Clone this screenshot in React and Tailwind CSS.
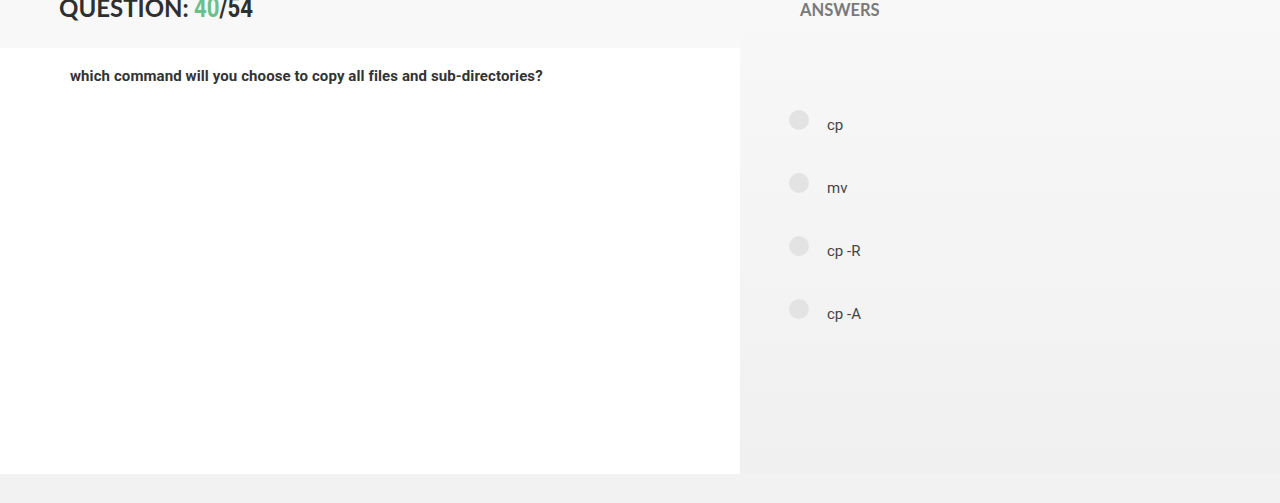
export default function App() {
  const answers = ["cp", "mv", "cp -R", "cp -A"];
  return (
    <div className="h-[503px] w-[1280px] overflow-hidden bg-[#f2f2f2]">
      <div className="flex h-[474px]">
        <div className="flex w-[740px] flex-col">
          <div className="h-[48px] bg-[#f8f8f8] pl-[59px]">
            <div
              className="mt-[-7px] flex items-baseline text-[24px] font-bold leading-[30px] text-[#2f2f2f]"
              style={{ fontFamily: "Lato, 'Open Sans', sans-serif" }}
            >
              <span>QUESTION:</span>
              <span
                className="ml-[5px] inline-block w-[62px] origin-left scale-x-[0.82] whitespace-nowrap text-[27px]"
                style={{ fontFamily: "Roboto, 'Liberation Sans', sans-serif" }}
              >
                <span className="text-[#6cc08a]">40</span>/54
              </span>
            </div>
          </div>
          <div className="flex-1 bg-white pl-[70px] pt-[19px]">
            <p
              className="text-[15px] font-bold leading-[18px] tracking-[0.1px] text-[#333]"
              style={{ fontFamily: "Roboto, sans-serif" }}
            >
              which command will you choose to copy all files and sub-directories?
            </p>
          </div>
        </div>
        <div className="flex-1 bg-gradient-to-b from-[#f8f8f8] to-[#f0f0f0] pl-[60px]">
          <div
            className="text-[16.5px] font-bold leading-[20px] text-[#7a7a7a]"
            style={{ fontFamily: "Lato, 'Open Sans', sans-serif" }}
          >
            ANSWERS
          </div>
          <div className="ml-[-11px] mt-[90px] flex flex-col gap-[43px]">
            {answers.map((a) => (
              <div key={a} className="flex h-[20px] items-start">
                <div className="h-[20px] w-[20px] rounded-full bg-[#e3e3e3]" />
                <span
                  className="ml-[18px] mt-[6px] text-[15px] leading-[18px] text-[#444]"
                  style={{ fontFamily: "Roboto, sans-serif" }}
                >
                  {a}
                </span>
              </div>
            ))}
          </div>
        </div>
      </div>
    </div>
  );
}
